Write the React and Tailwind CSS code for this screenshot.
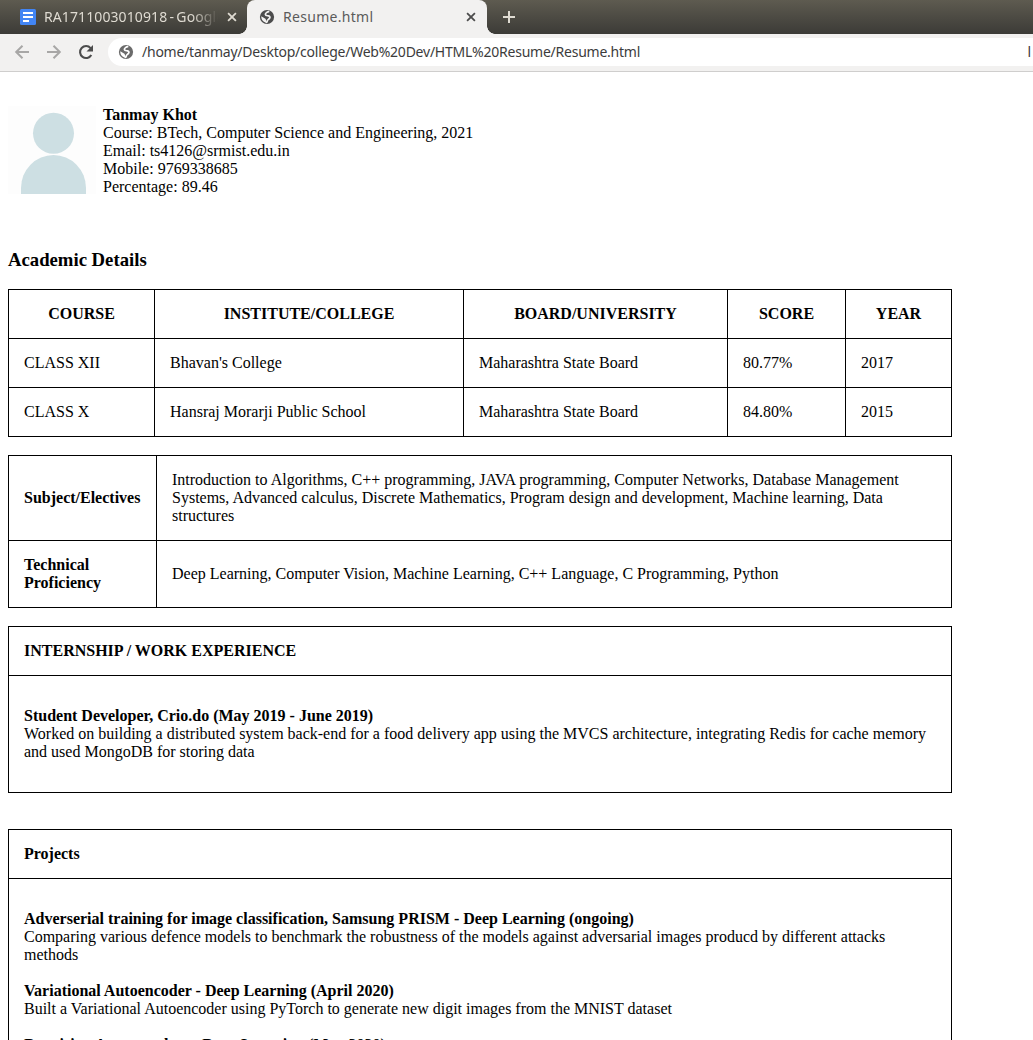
import React from "react";

const academic = [
  ["CLASS XII", "Bhavan's College", "Maharashtra State Board", "80.77%", "2017"],
  ["CLASS X", "Hansraj Morarji Public School", "Maharashtra State Board", "84.80%", "2015"],
];

const cell = "border border-black p-[15px]";
const table = "w-[944px] table-fixed border-collapse border border-black";

function DocsIcon() {
  return (
    <svg className="h-4 w-4 shrink-0" viewBox="0 0 16 16">
      <rect width="16" height="16" rx="1.5" fill="#4285f4" />
      <path d="M3 3h10v2H3zM3 7h10v2H3zM3 11h6v2H3z" fill="#fff" />
    </svg>
  );
}

function Globe({ className, land }) {
  return (
    <svg className={`h-4 w-4 shrink-0 ${className}`} viewBox="0 0 16 16">
      <circle cx="8" cy="8" r="7.1" fill="currentColor" />
      <path
        d="M9.6 2.6C8 3 6.2 4.4 6.4 5.6c.2 1 1.8 1 3.1 1.3 1.4.3 1.9 1.5 1 2.5-.7.8-1.6 1.1-2.1 2.2-.2.6-.3 1.3-.9 1.7"
        fill="none"
        stroke={land}
        strokeWidth="1.7"
        strokeLinecap="round"
      />
      <path d="M2.3 7.2 6.4 9.8c.5.3.3 1.2.8 1.6l.3 2.3C4.6 13.400 2.300 11 2.300 8z" fill={land} />
    </svg>
  );
}

function Line({ d, className, width = 2 }) {
  return (
    <svg className={`shrink-0 ${className}`} viewBox="0 0 20 20" fill="none" stroke="currentColor" strokeWidth={width}>
      <path d={d} />
    </svg>
  );
}

function Close({ className }) {
  return (
    <svg className={`ml-[7px] h-[14px] w-[14px] shrink-0 ${className}`} viewBox="0 0 14 14" fill="none" stroke="currentColor" strokeWidth="1.8">
      <path d="M3.100 3.100l7.800 7.800M10.900 3.100l-7.800 7.800" />
    </svg>
  );
}

function Reload() {
  return (
    <svg className="ml-3 h-5 w-5 shrink-0 text-[#4c4c4c]" viewBox="0 0 20 20">
      <path d="M15.300 13A6 6 0 1 1 14.600 6.100" fill="none" stroke="currentColor" strokeWidth="2.100" />
      <path d="M17 3v6.500h-6.500z" fill="currentColor" />
    </svg>
  );
}

function Browser() {
  return (
    <header className="font-['Noto_Sans','Open_Sans',sans-serif]">
      <div className="flex h-[34px] bg-linear-to-b from-[#5e5b50] to-[#3c3b37]">
        <div className="flex w-[247px] items-center pl-5 text-[14px] text-[#dfdbd2]">
          <DocsIcon />
          <span className="relative -top-px ml-2 w-[174px] overflow-hidden whitespace-nowrap mask-r-from-85% tracking-[0.1px] [word-spacing:-1.5px]">
            RA1711003010918 - Google Docs
          </span>
          <Close />
        </div>
        <div className="relative flex w-60 items-center rounded-t-lg bg-[#f2f1f0] pl-3 text-[14px] text-[#5b5b5b]">
          <span className="absolute bottom-0 -left-2 h-2 w-2 bg-[radial-gradient(circle_at_0_0,transparent_7.5px,#f2f1f0_8px)]" />
          <span className="absolute -right-2 bottom-0 h-2 w-2 bg-[radial-gradient(circle_at_100%_0,transparent_7.5px,#f2f1f0_8px)]" />
          <Globe className="text-[#4c4c4c]" land="#f2f1f0" />
          <span className="relative -top-px ml-2 w-[174px] whitespace-nowrap tracking-[0.3px]">Resume.html</span>
          <Close className="text-[#4c4c4c]" />
        </div>
        <div className="flex items-center pl-3 text-[#dfdbd2]">
          <Line d="M10 4v12M4 10h12" className="h-5 w-5" />
        </div>
      </div>
      <div className="flex h-[38px] items-center overflow-hidden border-b border-[#cfcecd] bg-[#f2f1f0] pb-px">
        <Line d="M17 10H4.500M10.500 3.700 4.200 10l6.300 6.300" className="ml-3 h-5 w-5 text-[#a8a7a6]" />
        <Line d="M3 10h12.500M9.500 3.700l6.300 6.300-6.300 6.300" className="ml-3 h-5 w-5 text-[#a8a7a6]" />
        <Reload />
        <div className="ml-3 flex h-7 w-[925px] shrink-0 items-center rounded-l-full bg-white pl-[10px] text-[14px] text-[#3c3c3c]">
          <Globe className="text-[#6b6b6b]" land="#ffffff" />
          <span className="relative -top-px ml-2 whitespace-nowrap tracking-[-0.237px]">
            /home/tanmay/Desktop/college/Web%20Dev/HTML%20Resume/Resume.html
          </span>
          <span className="relative -top-px mr-[2px] ml-auto">l</span>
        </div>
      </div>
    </header>
  );
}

function Avatar() {
  return (
    <svg className="h-[88px] w-[88px] shrink-0" viewBox="0 0 88 88">
      <rect width="88" height="88" fill="#fdfdfd" />
      <circle cx="45.5" cy="27.3" r="20.5" fill="#cddfe3" />
      <path d="M13 88v-6a32.5 33 0 0 1 65 0v6z" fill="#cddfe3" />
    </svg>
  );
}

function Entry({ title, children }) {
  return (
    <div>
      <div className="font-bold">{title}</div>
      <div>{children}</div>
    </div>
  );
}

export default function App() {
  return (
    <div className="h-[1040px] w-[1033px] overflow-hidden bg-white">
      <Browser />
      <main className="px-2 pt-[34px] font-['Liberation_Serif','Times_New_Roman',serif] text-[16px] leading-[18px] text-black">
        <section className="flex h-[90px] items-start">
          <div className="mr-[7px]">
            <Avatar />
          </div>
          <div>
            <div className="font-bold">Tanmay Khot</div>
            <div>Course: BTech, Computer Science and Engineering, 2021</div>
            <div>Email: ts4126@srmist.edu.in</div>
            <div>Mobile: 9769338685</div>
            <div>Percentage: 89.46</div>
          </div>
        </section>

        <h3 className="mt-[53px] text-[18.72px] leading-[21px] font-bold">Academic Details</h3>

        <table className={`${table} mt-[19px]`}>
          <colgroup>
            <col className="w-[146px]" />
            <col className="w-[309px]" />
            <col className="w-[264px]" />
            <col className="w-[118px]" />
            <col className="w-[106px]" />
          </colgroup>
          <thead>
            <tr>
              {["COURSE", "INSTITUTE/COLLEGE", "BOARD/UNIVERSITY", "SCORE", "YEAR"].map((h) => (
                <th key={h} className={cell}>{h}</th>
              ))}
            </tr>
          </thead>
          <tbody>
            {academic.map((row) => (
              <tr key={row[0]}>
                {row.map((value) => (
                  <td key={value} className={cell}>{value}</td>
                ))}
              </tr>
            ))}
          </tbody>
        </table>

        <table className={`${table} mt-[18px]`}>
          <colgroup>
            <col className="w-[148px]" />
            <col className="w-[795px]" />
          </colgroup>
          <tbody>
            <tr>
              <th className={`${cell} text-left`}>Subject/Electives</th>
              <td className={cell}>
                Introduction to Algorithms, C++ programming, JAVA programming, Computer Networks, Database
                Management Systems, Advanced calculus, Discrete Mathematics, Program design and development,
                Machine learning, Data structures
              </td>
            </tr>
            <tr>
              <th className={`${cell} text-left`}>Technical Proficiency</th>
              <td className={cell}>
                Deep Learning, Computer Vision, Machine Learning, C++ Language, C Programming, Python
              </td>
            </tr>
          </tbody>
        </table>

        <table className={`${table} mt-[18px]`}>
          <tbody>
            <tr>
              <th className={`${cell} text-left`}>INTERNSHIP / WORK EXPERIENCE</th>
            </tr>
            <tr>
              <td className="border border-black px-[15px] py-[31px]">
                <Entry title="Student Developer, Crio.do (May 2019 - June 2019)">
                  Worked on building a distributed system back-end for a food delivery app using the MVCS
                  architecture, integrating Redis for cache memory and used MongoDB for storing data
                </Entry>
              </td>
            </tr>
          </tbody>
        </table>

        <table className={`${table} mt-9`}>
          <tbody>
            <tr>
              <th className={`${cell} text-left`}>Projects</th>
            </tr>
            <tr>
              <td className="border border-black px-[15px] py-[31px]">
                <div className="flex flex-col gap-[18px]">
                  <Entry title="Adverserial training for image classification, Samsung PRISM - Deep Learning (ongoing)">
                    Comparing various defence models to benchmark the robustness of the models against
                    adversarial images producd by different attacks methods
                  </Entry>
                  <Entry title="Variational Autoencoder - Deep Learning (April 2020)">
                    Built a Variational Autoencoder using PyTorch to generate new digit images from the MNIST
                    dataset
                  </Entry>
                  <Entry title="Denoising Autoencoders - Deep Learning (May 2020)" />
                </div>
              </td>
            </tr>
          </tbody>
        </table>
      </main>
    </div>
  );
}
